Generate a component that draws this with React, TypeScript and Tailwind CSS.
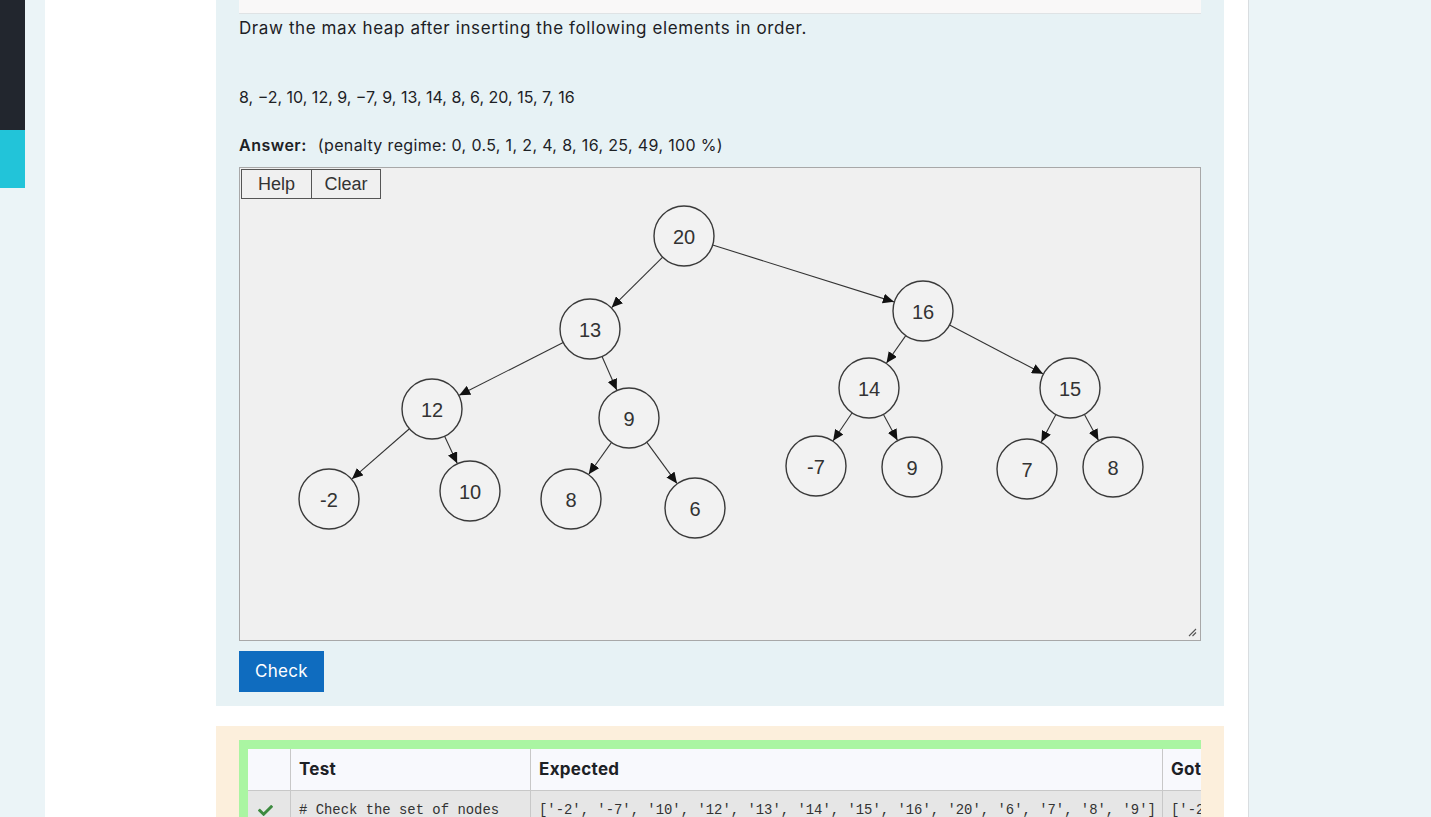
import { FaCheck } from "react-icons/fa";

type HeapNode = { id: string; label: string; x: number; y: number };

const nodes: HeapNode[] = [
  { id: "n20", label: "20", x: 444, y: 68 },
  { id: "n13", label: "13", x: 350, y: 161 },
  { id: "n16", label: "16", x: 683, y: 143 },
  { id: "n12", label: "12", x: 192, y: 241 },
  { id: "n9a", label: "9", x: 389, y: 250 },
  { id: "n14", label: "14", x: 629, y: 220 },
  { id: "n15", label: "15", x: 830, y: 220 },
  { id: "nm2", label: "-2", x: 89, y: 331 },
  { id: "n10", label: "10", x: 230, y: 323 },
  { id: "n8a", label: "8", x: 331, y: 331 },
  { id: "n6", label: "6", x: 455, y: 340 },
  { id: "nm7", label: "-7", x: 576, y: 298 },
  { id: "n9b", label: "9", x: 672, y: 299 },
  { id: "n7", label: "7", x: 787, y: 301 },
  { id: "n8b", label: "8", x: 873, y: 299 },
];

const edges: [string, string][] = [
  ["n20", "n13"],
  ["n20", "n16"],
  ["n13", "n12"],
  ["n13", "n9a"],
  ["n12", "nm2"],
  ["n12", "n10"],
  ["n9a", "n8a"],
  ["n9a", "n6"],
  ["n16", "n14"],
  ["n16", "n15"],
  ["n14", "nm7"],
  ["n14", "n9b"],
  ["n15", "n7"],
  ["n15", "n8b"],
];

const R = 30;

const HeapCanvas = () => {
  const byId: Record<string, HeapNode> = Object.fromEntries(nodes.map((n) => [n.id, n]));
  return (
    <div className="relative mt-[10px] h-[474px] border border-[#a8a8a8] bg-[#f0f0f0]">
      <svg className="absolute inset-0" width="960" height="472">
        <defs>
          <marker
            id="arrow"
            markerUnits="userSpaceOnUse"
            markerWidth="11"
            markerHeight="10"
            refX="11"
            refY="5"
            orient="auto"
          >
            <path d="M0,0 L11,5 L0,10 z" fill="#111" />
          </marker>
        </defs>
        {edges.map(([a, b]) => {
          const p = byId[a];
          const c = byId[b];
          const dx = c.x - p.x;
          const dy = c.y - p.y;
          const len = Math.hypot(dx, dy);
          const ux = dx / len;
          const uy = dy / len;
          return (
            <line
              key={a + b}
              x1={p.x + ux * R}
              y1={p.y + uy * R}
              x2={c.x - ux * (R + 0.5)}
              y2={c.y - uy * (R + 0.5)}
              stroke="#333"
              strokeWidth="1.1"
              markerEnd="url(#arrow)"
            />
          );
        })}
        {nodes.map((n) => (
          <g key={n.id}>
            <circle cx={n.x} cy={n.y} r={R} fill="#f2f2f2" stroke="#3a3a3a" strokeWidth="1.4" />
            <text
              x={n.x}
              y={n.y + 1}
              textAnchor="middle"
              dominantBaseline="central"
              fontFamily="'Liberation Sans', Arial, sans-serif"
              fontSize="20"
              fill="#333"
            >
              {n.label}
            </text>
          </g>
        ))}
      </svg>
      <div className="absolute left-px top-px flex font-['Liberation_Sans',Arial,sans-serif] text-[18px] text-[#333]">
        <button className="flex h-[30px] w-[71px] items-center justify-center border border-[#555] bg-[#f0f0f0]">
          Help
        </button>
        <button className="-ml-px flex h-[30px] w-[70px] items-center justify-center border border-[#555] bg-[#f0f0f0]">
          Clear
        </button>
      </div>
      <svg className="absolute bottom-[3px] right-[3px]" width="9" height="9" viewBox="0 0 9 9">
        <path d="M1 8 L8 1 M4.5 8 L8 4.5" stroke="#555" strokeWidth="1.1" />
      </svg>
    </div>
  );
};

const got = "['-2', '-7', '10', '12', '13', '14', '15', '16', '20', '6', '7', '8', '9']";

const ResultTable = () => (
  <div className="w-[962px] overflow-hidden">
    <table className="w-[1500px] table-fixed border-separate border-spacing-0 border-[9px] border-b-0 border-r-0 border-[#aaf5a2] text-left">
      <colgroup>
        <col className="w-[43px]" />
        <col className="w-[240px]" />
        <col className="w-[632px]" />
        <col />
      </colgroup>
      <thead>
        <tr className="bg-[#f8f9fd] text-[17px] font-semibold tracking-[0.3px] text-[#1d2125]">
          <th className="h-[42px] border-b border-r border-[#c8c8c8]"></th>
          <th className="border-b border-r border-[#c8c8c8] px-2">Test</th>
          <th className="border-b border-r border-[#c8c8c8] px-2">Expected</th>
          <th className="border-b border-[#c8c8c8] px-2">Got</th>
        </tr>
      </thead>
      <tbody>
        <tr className="bg-[#e6e6e6] font-['Liberation_Mono','DejaVu_Sans_Mono',monospace] text-[13.9px] text-[#333]">
          <td className="h-[38px] border-r border-[#c8c8c8] pl-[10px]">
            <FaCheck className="text-[#3d8a3f]" size={15} />
          </td>
          <td className="whitespace-pre border-r border-[#c8c8c8] px-2"># Check the set of nodes</td>
          <td className="whitespace-pre border-r border-[#c8c8c8] px-2">{got}</td>
          <td className="whitespace-pre px-2">{got}</td>
        </tr>
      </tbody>
    </table>
  </div>
);

export default function App() {
  return (
    <div className="flex h-[817px] w-[1431px] overflow-hidden bg-[#ebf4f7] font-['Inter','Open_Sans',sans-serif] text-[#1d2125]">
      <div className="flex w-[25px] shrink-0 flex-col">
        <div className="h-[130px] bg-[#22262e]"></div>
        <div className="h-[58px] bg-[#22c4d9]"></div>
      </div>
      <div className="ml-[20px] w-[1204px] shrink-0 border-r border-[#d9dde0] bg-white pl-[171px] pr-[24px]">
        <div className="w-[1008px] bg-[#e7f2f5] px-[23px] pb-[14px]">
          <div className="h-[14px] border-b border-[#dfe3e5] bg-[#f9f8f8]"></div>
          <p className="mt-[2px] text-[17px] leading-[24px] tracking-[0.6px]">
            Draw the max heap after inserting the following elements in order.
          </p>
          <p className="mt-[45px] text-[16px] leading-[24px]">
            8, −2, 10, 12, 9, −7, 9, 13, 14, 8, 6, 20, 15, 7, 16
          </p>
          <p className="mt-[24px] text-[16px] leading-[24px]">
            <span className="font-semibold tracking-[0.5px]">Answer:</span>
            <span className="ml-[11px] tracking-[0.35px]">
              (penalty regime: 0, 0.5, 1, 2, 4, 8, 16, 25, 49, 100 %)
            </span>
          </p>
          <HeapCanvas />
          <button className="mt-[10px] h-[41px] w-[85px] bg-[#0f6cbf] text-[17px] tracking-[0.3px] text-white">
            Check
          </button>
        </div>
        <div className="mt-[20px] w-[1008px] bg-[#fcefdc] px-[23px] pt-[14px] pb-[20px]">
          <ResultTable />
        </div>
      </div>
    </div>
  );
}
